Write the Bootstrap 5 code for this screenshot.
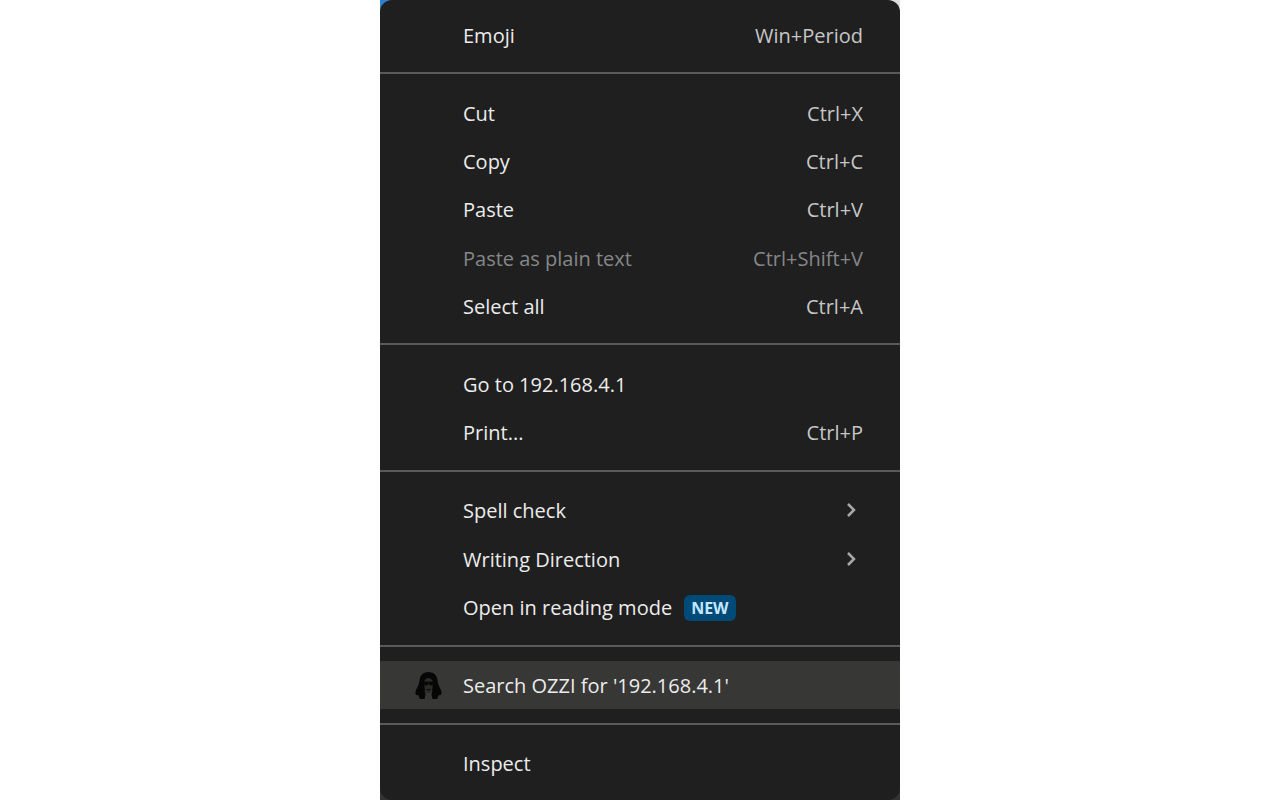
<!DOCTYPE html>
<html lang="en">
<head>
<meta charset="utf-8">
<meta name="viewport" content="width=device-width, initial-scale=1">
<title>Context menu</title>
<link href="https://cdn.jsdelivr.net/npm/bootstrap@5.3.0/dist/css/bootstrap.min.css" rel="stylesheet">
<style>
  body { background: #fff; font-family: "Open Sans", "Noto Sans", sans-serif; }
  .menu-backdrop { max-width: 520px; background: linear-gradient(90deg, #2f7fd0 50%, #dcdcdc 50%) top / 100% 20px no-repeat, #333; }
  .menu-panel { background: #1f1f1f; border-radius: 12px; padding: 10px 0 13px; }
  .menu-row { min-height: 48px; padding: 3px 37px 0 35px; border: 0; background: transparent; color: #ececec; font-size: 20px; line-height: 28px; }
  .menu-row:hover, .menu-row.current { background: #373736; }
  .menu-row:disabled { color: #858789; background: transparent; }
  .menu-icon { width: 28px; height: 28px; margin-right: 20px; }
  .shortcut { color: #c6c6c6; }
  .menu-row:disabled .shortcut { color: #858789; }
  .menu-line { height: 2px; margin: 14px 0; border: 0; background: #5a5a5a; opacity: 1; }
  .new-tag { background: #004a77; color: #c2e7ff; font-size: 16px; line-height: 26px; padding: 0 7px; border-radius: 6px; margin-left: 12px; }
  .chevron { width: 12px; height: 16px; margin-right: 6px; }
</style>
</head>
<body>
<main class="menu-backdrop w-100 mx-auto min-vh-100 d-flex">
  <div class="menu-panel w-100 d-flex flex-column" role="menu">
    <button type="button" role="menuitem" class="menu-row d-flex flex-fill align-items-center text-start"><span class="menu-icon"></span><span>Emoji</span><span class="shortcut ms-auto">Win+Period</span></button>
    <hr class="menu-line">
    <button type="button" role="menuitem" class="menu-row d-flex flex-fill align-items-center text-start"><span class="menu-icon"></span><span>Cut</span><span class="shortcut ms-auto">Ctrl+X</span></button>
    <button type="button" role="menuitem" class="menu-row d-flex flex-fill align-items-center text-start"><span class="menu-icon"></span><span>Copy</span><span class="shortcut ms-auto">Ctrl+C</span></button>
    <button type="button" role="menuitem" class="menu-row d-flex flex-fill align-items-center text-start"><span class="menu-icon"></span><span>Paste</span><span class="shortcut ms-auto">Ctrl+V</span></button>
    <button type="button" role="menuitem" class="menu-row d-flex flex-fill align-items-center text-start" disabled><span class="menu-icon"></span><span>Paste as plain text</span><span class="shortcut ms-auto">Ctrl+Shift+V</span></button>
    <button type="button" role="menuitem" class="menu-row d-flex flex-fill align-items-center text-start"><span class="menu-icon"></span><span>Select all</span><span class="shortcut ms-auto">Ctrl+A</span></button>
    <hr class="menu-line">
    <button type="button" role="menuitem" class="menu-row d-flex flex-fill align-items-center text-start"><span class="menu-icon"></span><span>Go to 192.168.4.1</span></button>
    <button type="button" role="menuitem" class="menu-row d-flex flex-fill align-items-center text-start"><span class="menu-icon"></span><span>Print...</span><span class="shortcut ms-auto">Ctrl+P</span></button>
    <hr class="menu-line">
    <button type="button" role="menuitem" aria-haspopup="true" class="menu-row d-flex flex-fill align-items-center text-start"><span class="menu-icon"></span><span>Spell check</span><svg class="chevron ms-auto" viewBox="0 0 12 16" fill="none" stroke="#a8a8a8" stroke-width="2.5" aria-hidden="true"><path d="M3 1l6 6-6 6"/></svg></button>
    <button type="button" role="menuitem" aria-haspopup="true" class="menu-row d-flex flex-fill align-items-center text-start"><span class="menu-icon"></span><span>Writing Direction</span><svg class="chevron ms-auto" viewBox="0 0 12 16" fill="none" stroke="#a8a8a8" stroke-width="2.5" aria-hidden="true"><path d="M3 1l6 6-6 6"/></svg></button>
    <button type="button" role="menuitem" class="menu-row d-flex flex-fill align-items-center text-start"><span class="menu-icon"></span><span>Open in reading mode</span><span class="new-tag fw-bold">NEW</span></button>
    <hr class="menu-line">
    <button type="button" role="menuitem" class="menu-row current d-flex flex-fill align-items-center text-start">
      <svg class="menu-icon" viewBox="0 0 28 28" aria-hidden="true">
        <path fill="#060606" d="M13.500 0C8 0 5 3.500 4.500 8.500 4.200 13 1.500 16 .5 19.500c-.4 1.500.5 2.500.3 3.500 1.500-.3 2.200.2 3.200.5-.5 1.500 0 2.800 1.500 3.500h4l1-4.500-1-4.500h8l-1 4.500 1 4.500h4c1.500-.7 2-2 1.500-3.500 1-.3 1.700-.8 3.200-.5-.2-1 .7-2 .3-3.500-1-3.500-3.700-6.500-4-11C22 3.500 19 0 13.500 0z"/>
        <path fill="#2a2a29" d="M9.500 8.500Q13.500 3 17.500 8.500v6c0 4-2 6.500-4 6.500s-4-2.500-4-6.500z"/>
        <path fill="#080808" d="M9 9.500h3.500l1 .7 1-.7H18c0 3-.8 4-2 4s-2-1-2.500-2c-.5 1-1.300 2-2.500 2s-2-1-2-4zM11.500 17.200h4v1h-4z"/>
      </svg><span>Search OZZI for '192.168.4.1'</span></button>
    <hr class="menu-line">
    <button type="button" role="menuitem" class="menu-row d-flex flex-fill align-items-center text-start"><span class="menu-icon"></span><span>Inspect</span></button>
  </div>
</main>
<script src="https://cdn.jsdelivr.net/npm/bootstrap@5.3.0/dist/js/bootstrap.bundle.min.js"></script>
</body>
</html>
